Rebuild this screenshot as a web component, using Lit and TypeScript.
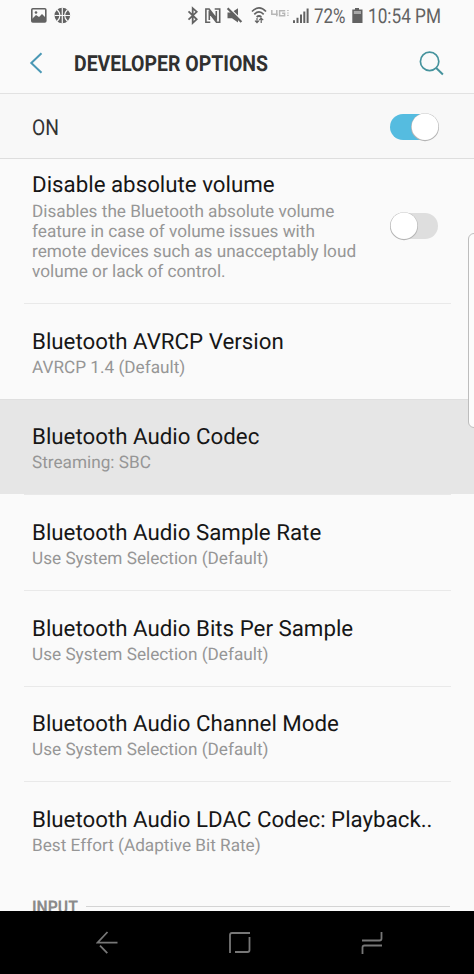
import { LitElement, html, svg, css } from "lit";
import { customElement, property } from "lit/decorators.js";

@customElement("toggle-switch")
class ToggleSwitch extends LitElement {
  @property({ type: Boolean, reflect: true }) on = false;
  static styles = css`
    :host { display: block; width: 50px; height: 30px; flex: none; }
    svg { display: block; }
  `;
  render() {
    const cx = this.on ? 36 : 15;
    return html`<svg width="50" height="30" viewBox="0 0 50 30">
      <rect x="1" y="2" width="48" height="26" rx="13" fill=${this.on ? "#55bce0" : "#dedede"} />
      <circle cx=${cx} cy="15.2" r="14" fill="#b5b5b5" />
      <circle cx=${cx} cy="14.7" r="13.3" fill="#fff" />
    </svg>`;
  }
}

@customElement("narrow-text")
class NarrowText extends LitElement {
  @property() text = "";
  @property({ type: Number }) width = 100;
  @property({ type: Number }) size = 20;
  static styles = css`
    :host { display: block; flex: none; }
    svg { display: block; overflow: visible; font-family: Roboto, "Liberation Sans", sans-serif; }
  `;
  render() {
    return html`<svg width=${this.width} height="24" font-size=${this.size} fill="currentColor">
      ${svg`<text x="0" y="19" font-weight="inherit" textLength=${this.width} lengthAdjust="spacingAndGlyphs">${this.text}</text>`}
    </svg>`;
  }
}

interface Option { title: string; summary: string; active?: boolean; }

const OPTIONS: Option[] = [
  { title: "Bluetooth AVRCP Version", summary: "AVRCP 1.4 (Default)" },
  { title: "Bluetooth Audio Codec", summary: "Streaming: SBC", active: true },
  { title: "Bluetooth Audio Sample Rate", summary: "Use System Selection (Default)" },
  { title: "Bluetooth Audio Bits Per Sample", summary: "Use System Selection (Default)" },
  { title: "Bluetooth Audio Channel Mode", summary: "Use System Selection (Default)" },
  { title: "Bluetooth Audio LDAC Codec: Playback..", summary: "Best Effort (Adaptive Bit Rate)" },
];

@customElement("app-root")
class AppRoot extends LitElement {
  static styles = css`
    :host {
      display: flex; flex-direction: column; position: relative;
      width: 474px; height: 974px; overflow: hidden; background: #fafafa;
      font-family: Roboto, "Liberation Sans", sans-serif; color: #161616;
      text-rendering: geometricPrecision;
    }
    svg { display: block; flex: none; }
    .status { height: 33px; flex: none; color: #626262; }
    .status-line { display: flex; }
    .status .glyphs { flex: none; }
    .status narrow-text { padding-top: 4px; }
    .pct { margin-left: 1px; }
    .clock { margin-left: 5px; }
    .header {
      height: 61px; flex: none; box-sizing: border-box; border-bottom: 1px solid #e2e2e2;
      display: flex; align-items: center; padding: 0 30px 0 29px;
    }
    .header narrow-text { margin: 2px 0 0 30px; font-weight: 700; color: #303030; }
    .search { margin-left: auto; }
    .master {
      height: 65px; flex: none; box-sizing: border-box; border-bottom: 1px solid #dedede; background: #f8f8f8;
      display: flex; align-items: center; justify-content: space-between; padding: 1px 35px 0 32px; color: #333;
    }
    .master narrow-text { padding-top: 3px; }
    .list { flex: 1; overflow: hidden; }
    .title { font-size: 22.3px; line-height: 28px; white-space: nowrap; }
    .summary { font-size: 17.2px; line-height: 20.2px; color: #969696; white-space: nowrap; }
    .volume { height: 144px; display: flex; box-sizing: border-box; padding: 11px 35px 0 32px; justify-content: space-between; }
    .volume .title { padding-top: 1px; }
    .volume .summary { padding-top: 2.5px; }
    .volume toggle-switch { margin-top: 41px; }
    .option { height: 95.7px; box-sizing: border-box; padding: 0 32px; position: relative; }
    .option::before { content: ""; display: block; height: 1px; margin: 0 -9px 0 -8px; background: #e9e9e9; }
    .option .title { padding-top: 23.6px; }
    .option .summary { line-height: 25px; }
    .active { background: #e6e6e6; }
    .active::before { background: #dfdfdf; margin: 0 -32px; }
    .category { display: flex; padding: 17px 24px 0 32px; color: #8b8b8b; font-weight: 700; }
    .rule { flex: 1; height: 1px; background: #d4d4d4; margin: 12px 0 0 8px; }
    .handle {
      position: absolute; left: 468px; top: 233px; width: 14px; height: 193px;
      border: 1px solid #bdbdbd; border-radius: 6px; background: #fcfcfc;
    }
    .nav { height: 63px; flex: none; background: #000; display: flex; align-items: center; justify-content: space-between; padding: 0 91px 0 96px; }
  `;

  render() {
    return html`
      <div class="status"><div class="status-line">
        <svg class="glyphs" width="313" height="33" viewBox="0 0 313 33" fill="none" stroke="#626262">
          <rect x="31.8" y="8.8" width="14" height="13.2" rx="1" stroke-width="1.6" />
          <path d="M32 22v-3l4-4 3 2 3-3 4 4v4z" fill="#626262" stroke="none" />
          <circle cx="36" cy="12.5" r="1.3" fill="#626262" stroke="none" />
          <circle cx="62.3" cy="15.5" r="7.8" fill="#626262" stroke="none" />
          <path d="M62.3 7.5v16M54.5 15.5H70M57 9.5q6 6 0 12M67.6 9.5q-6 6 0 12" stroke="#fafafa" stroke-width="1.2" />
          <path d="M188.5 11.3l8.2 8-4 3.7V8.2l4 3.6-8.2 7.8" stroke-width="1.8" />
          <path d="M210.3 22.2h-4.4V9h3.2l7.2 9.5V11M214.7 9h5v13.2h-3.2L209.3 12.7V20" stroke-width="1.6" />
          <path d="M209.5 9.5l7.3 9.7v3l-7.8-9.7z" fill="#626262" stroke="none" />
          <path d="M227.5 12.5h4l6.5-4.3v14.3l-6-4.2h-4.5z" fill="#626262" stroke="none" />
          <path d="M228.5 7L243 21.5" stroke="#fafafa" stroke-width="1.5" />
          <path d="M227.6 8.2L241.4 22" stroke-width="2.2" />
          <path d="M252 11.5Q259 4.4 266 11.5M254.3 14.3Q259 9.6 263.7 14.3M256.6 17q2.4-2 4.8 0" stroke-width="1.7" />
          <path d="M257 18v4.8M255 20.7l2 2 2-2M261.2 23v-4.8M259.2 20.2l2-2 2 2" stroke-width="1.2" />
          <path d="M271.8 10v4.3h6M276.8 10v6.3M285.2 10.7h-5.6v5h5v-2.5h-2.5" stroke="#b7b7b7" stroke-width="1.5" />
          <path d="M287 10.5h1.8M287 13h1.8M287 15.4h1.8" stroke="#c4c4c4" stroke-width="1.1" />
          <path d="M294 23v-2.7M297.5 23v-5.3M301 23v-8.5M304.3 23V11.5M307.6 23V8.5" stroke-width="2" />
        </svg>
        <narrow-text class="pct" text="72%" width="31.5" size="20.5"></narrow-text>
        <svg class="glyphs" width="17" height="33" viewBox="0 0 17 33">
          <path d="M9 8h4v1.5h3.5V23H6.3V9.5H9z" fill="#626262" />
          <path d="M7.8 11h7.2v3H7.8z" fill="#a8a8a8" />
        </svg>
        <narrow-text class="clock" text="10:54 PM" width="73" size="20.5"></narrow-text>
      </div></div>
      <div class="header">
        <svg width="15" height="24" viewBox="0 0 15 24" fill="none" stroke="#4a98b5" stroke-width="2"><path d="M12.5 2.3L2.3 12l10.2 9.8" /></svg>
        <narrow-text text="DEVELOPER OPTIONS" width="194" size="22"></narrow-text>
        <svg class="search" width="25" height="25" viewBox="0 0 25 25" fill="none" stroke="#46939d" stroke-width="1.7"><circle cx="10.6" cy="10.4" r="9.2" /><path d="M17.2 17l6.7 6.5" stroke-width="2" /></svg>
      </div>
      <div class="master"><narrow-text text="ON" width="27" size="22"></narrow-text><toggle-switch on></toggle-switch></div>
      <div class="list">
        <div class="volume">
          <div>
            <div class="title">Disable absolute volume</div>
            <div class="summary">Disables the Bluetooth absolute volume<br />feature in case of volume issues with<br />remote devices such as unacceptably loud<br />volume or lack of control.</div>
          </div>
          <toggle-switch></toggle-switch>
        </div>
        ${OPTIONS.map((o) => html`<div class="option ${o.active ? "active" : ""}">
          <div class="title">${o.title}</div><div class="summary">${o.summary}</div>
        </div>`)}
        <div class="category"><narrow-text text="INPUT" width="46" size="17.5"></narrow-text><div class="rule"></div></div>
      </div>
      <div class="nav">
        <svg width="22" height="24" viewBox="0 0 22 24" fill="none" stroke="#777" stroke-width="1.8"><path d="M11.5 1L1.5 11.7H21.5M4 14.6l7.3 7.6" /></svg>
        <svg width="22" height="24" viewBox="0 0 22 24" fill="none" stroke="#777" stroke-width="1.8"><path d="M1 22V4q0-2 2-2H21M6 21h12.5q2 0 2-2V6" /></svg>
        <svg width="22" height="24" viewBox="0 0 22 24" fill="none" stroke="#777" stroke-width="1.8"><path d="M1 9.5H18.5q2 0 2-2V1M21 14.5H3.5q-2 0-2 2V23" /></svg>
      </div>
      <div class="handle"></div>
    `;
  }
}
